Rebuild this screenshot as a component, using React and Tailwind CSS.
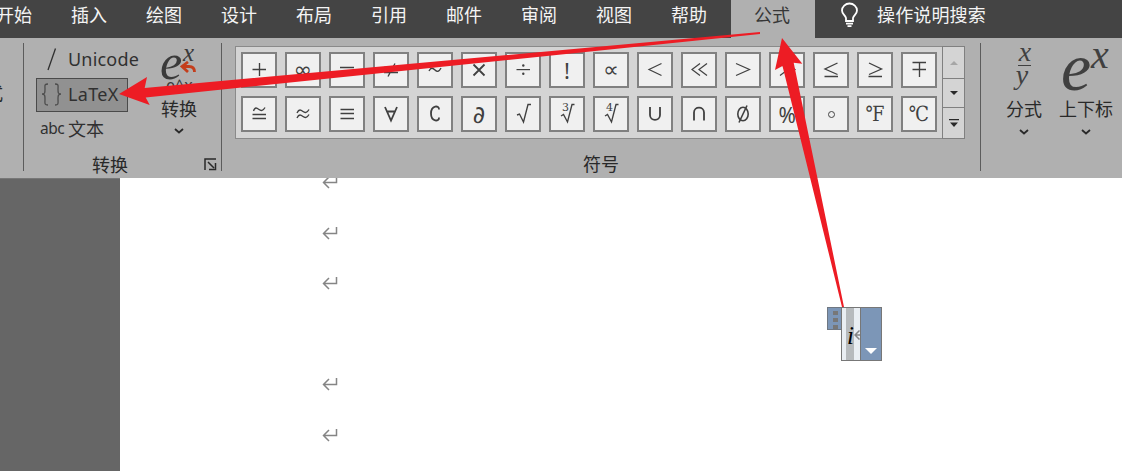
import React from "react";

const TABS = ["开始", "插入", "绘图", "设计", "布局", "引用", "邮件", "审阅", "视图", "帮助"];
const SYMBOLS = [
  ["+", "∞", "=", "≠", "~", "×", "÷", "!", "∝", "<", "≪", ">", "≫", "≤", "≥", "∓"],
  ["≅", "≈", "≡", "∀", "∁", "∂", "√", "∛", "∜", "∪", "∩", "∅", "%", "°", "℉", "℃"],
];

const strokeGlyphs = {
  "+": "M9.500 15.500H23M16.500 9V22",
  "=": "M9 13.500H23M9 18.500H23",
  "≠": "M9 13.500H23M9 18.500H23M20 9.500L13 22.500",
  "~": "M10 17C12 13 14 14 16 16S20 18 22 14",
  "×": "M10.5 10.5L21.5 21.5M21.5 10.5L10.5 21.5",
  "<": "M22.5 9.5L10 15.5L22.5 21.5",
  ">": "M9 9.5L22.5 15.5L9 21.5",
  "≪": "M17 9.5L9 15.5L17 21.5M24 9.5L16 15.5L24 21.5",
  "≫": "M9 9.5L17 15.5L9 21.5M16 9.5L24 15.5L16 21.5",
  "≤": "M22.5 9L10 15L22.5 20.5M9.5 22.5H23",
  "≥": "M10 9L22.5 15L10 20.5M9.5 22.5H23",
  "∓": "M9.5 8.5H23M9.5 15.5H23M16.500 8.5V23",
  "≅": "M10.500 13C12 8.500 14 10 16 11.500S20 13 22 9.500M9.500 16.500H23M9.500 20.500H23",
  "≈": "M10 15C12 10.500 14 12 16 13.500S20 15 22 11.500M10 20C12 15.500 14 17 16 18.500S20 20 22 16.500",
  "≡": "M9.500 11.500H23M9.500 15.500H23M9.500 20.500H23",
  "∀": "M10 9L16 22.500L22 9M12 13.500H20",
  "∁": "M20 11.500C20.500 7 12 7 12 15.500S20.500 24 20 19.500",
  "√": "M10 17L12.500 16L16.500 24L21 6.500H24",
  "∛": "M10 18L12.500 16.500L16.500 24L21 6.500H23.500",
  "∜": "M10 18L12.500 16.500L16.500 24L21 6.500H23.500",
  "∪": "M11 9V17C11 23.500 21 23.500 21 17V9",
  "∩": "M11 22.500V14.500C11 8 21 8 21 14.500V22.500",
};

const boldStrokes = ["∪", "∩", "×", "∀", "∁"];
const thinLines = ["<", ">", "≪", "≫"];
const rootIndex = { "∛": "3", "∜": "4" };

function glyphFont(s) {
  if (s === "∞" || s === "∝") return "font-['DejaVu_Sans'] text-[22px] leading-8";
  if (s === "℉" || s === "℃") return "inline-block scale-x-[0.86] font-['DejaVu_Serif'] text-[21px] leading-8";
  if (s === "!") return "font-['Noto_Sans',sans-serif] text-[22px] leading-[30px]";
  if (s === "∂") return "font-['Noto_Sans','DejaVu_Sans',sans-serif] text-[24px] leading-[30px]";
  return "inline-block scale-x-[0.95] font-['Noto_Sans','DejaVu_Sans',sans-serif] text-[22px] leading-8";
}

function SymbolContent({ s }) {
  const path = strokeGlyphs[s];
  if (path) {
    return (
      <svg
        viewBox="0 0 32 32"
        className="h-8 w-8"
        fill="none"
        stroke="currentColor"
        strokeWidth={boldStrokes.includes(s) ? 1.8 : thinLines.includes(s) ? 1.2 : 1.35}
      >
        <path d={path} />
      </svg>
    );
  }
  if (s === "÷") {
    return (
      <svg viewBox="0 0 32 32" className="h-8 w-8" fill="currentColor">
        <path d="M9.500 15H23V16.200H9.500Z" />
        <circle cx="16.300" cy="11.500" r="1.200" />
        <circle cx="16.300" cy="19.800" r="1.200" />
      </svg>
    );
  }
  if (s === "°") return <span className="h-[7px] w-[7px] rounded-full border-[1.3px] border-[#444]" />;
  if (s === "∅") {
    return (
      <svg viewBox="0 0 32 32" className="h-8 w-8" fill="none" stroke="currentColor" strokeWidth="1.6">
        <ellipse cx="16" cy="16" rx="5.200" ry="6.800" />
        <path d="M20 7.500L12 24.500" />
      </svg>
    );
  }
  return <span className={glyphFont(s)}>{s}</span>;
}

function Symbol({ s }) {
  return (
    <button className="relative flex h-9 w-9 shrink-0 items-center justify-center border-2 border-[#808080] bg-[#f0f0f0] text-[#404040]">
      <SymbolContent s={s} />
      {rootIndex[s] && (
        <span className="absolute top-[4px] left-[11px] font-['DejaVu_Serif',serif] text-[11px] leading-[12px]">{rootIndex[s]}</span>
      )}
    </button>
  );
}

function Chevron() {
  return (
    <svg viewBox="0 0 10 6" className="h-[6px] w-[10px]" fill="none" stroke="#292929" strokeWidth="1.8">
      <path d="M1 1L5 4.500L9 1" />
    </svg>
  );
}

function Enter() {
  return (
    <svg viewBox="0 0 17 16" className="block h-4 w-[17px]" fill="none" stroke="#858585" strokeWidth="1.5">
      <path d="M14.500 2V8.500H1.500M7 3L1.500 8.500L7 14" />
    </svg>
  );
}

function Header() {
  return (
    <header className="flex h-[38px] bg-[#444] text-[18px] leading-[28px] text-[#f4f4f4]">
      <nav className="-ml-1 flex w-[735px] shrink-0">
        {TABS.map((t) => (
          <span key={t} className="w-[75px] shrink-0 last:w-[60px]">{t}</span>
        ))}
      </nav>
      <span className="w-[84px] shrink-0 bg-[#b0b0b0] pl-[23px] text-[#363636]">公式</span>
      <div className="flex pl-[25px]">
        <svg viewBox="0 0 20 28" className="mt-[2px] h-7 w-5" fill="none" stroke="#fff" strokeWidth="1.8">
          <path d="M6 19V16C5 13 2 12 2 8.500A7.500 7 0 0 1 17 8.500C17 12 14 13 13 16V19ZM6 21.700H13M7.500 24.200H11.500" />
        </svg>
        <span className="ml-[17px] tracking-[0.15px]">操作说明搜索</span>
      </div>
    </header>
  );
}

function ConvertGroup() {
  return (
    <section className="flex w-[198px] shrink-0 flex-col">
      <div className="flex h-[111px]">
        <div className="flex w-[120px] flex-col pl-3 font-['Noto_Sans','Noto_Sans_CJK_SC',sans-serif] text-[18px] text-[#303030]">
          <div className="mb-[3px] flex h-[32px] items-center">
            <svg viewBox="0 0 32 32" className="h-8 w-8 shrink-0" fill="none" stroke="#303030" strokeWidth="1.3">
              <path d="M12 27L19.500 5.500" />
            </svg>
            <span className="tracking-[0.2px]">Unicode</span>
          </div>
          <div className="flex h-[34px] w-[92px] shrink-0 items-center border border-[#4a4a4a] bg-[#919191]">
            <svg viewBox="0 0 31 32" className="h-8 w-[31px] shrink-0" fill="none" stroke="#4c4c4c" strokeWidth="1.3">
              <path d="M11 5C7 5 8 7 8 10C8 14 8 15 5 15C8 15 8 17 8 20C8 24 7 26 11 26M18 5C22 5 21 7 21 10C21 14 21 15 24 15C21 15 21 17 21 20C21 24 22 26 18 26" />
            </svg>
            <span className="-mt-[2px] tracking-[0.3px]">LaTeX</span>
          </div>
          <div className="flex h-[34px] items-center">
            <span className="w-8 pl-[4px] text-[15.5px] tracking-[-0.5px]">abc</span>
            <span>文本</span>
          </div>
        </div>
        <div className="flex w-[70px] flex-col items-center">
          <div className="relative h-[52px] w-12 shrink-0 text-[#3a3a3a]">
            <span className="absolute top-[-5px] left-[5px] font-['Liberation_Serif',serif] text-[50px] leading-[48px] italic">e</span>
            <span className="absolute top-[-2px] left-[28px] font-['Liberation_Serif',serif] text-[25px] leading-[24px] italic">x</span>
            <svg viewBox="0 0 17 13" className="absolute top-[18px] left-[25px] h-[13px] w-[17px]" fill="none" stroke="#c43e1c" strokeWidth="2.800">
              <path d="M8 1L2 5.500L8 11M2 5.500H9C13 5.500 14.500 8 14.500 11" />
            </svg>
            <span className="absolute top-[33px] left-[11px] font-['Noto_Sans',sans-serif] text-[16px] leading-[18px]">e^x</span>
          </div>
          <span className="text-[18px] leading-[26px]">转换</span>
          <div className="mt-[7px]"><Chevron /></div>
        </div>
      </div>
      <div className="flex h-5 items-center">
        <span className="w-[172px] text-center text-[18px] leading-5">转换</span>
        <svg viewBox="0 0 13 13" className="ml-[8px] h-[13px] w-[13px]" fill="none" stroke="#292929" strokeWidth="1.500">
          <path d="M1 12V1H12M4 4L10 10M11.500 5V11.500H5" />
        </svg>
      </div>
    </section>
  );
}

function SymbolsGroup() {
  return (
    <section className="flex w-[758px] shrink-0 flex-col pt-[3px] pl-[13px]">
      <div className="flex h-[93px] w-[730px] border border-[#8a8a8a] bg-[#d4d4d4]">
        <div className="flex w-[706px] shrink-0 flex-col gap-2 pt-[5px] pl-[5px]">
          {SYMBOLS.map((row, i) => (
            <div key={i} className="flex gap-2">{row.map((s) => <Symbol key={s} s={s} />)}</div>
          ))}
        </div>
        <div className="-my-px -mr-px grid flex-1 grid-rows-[32px_29px_30px] border border-[#808080]">
          <div className="flex items-center justify-center border-b border-[#808080]">
            <svg viewBox="0 0 8 4" className="h-1 w-2" fill="#a6a6a6"><path d="M0 4L4 0L8 4Z" /></svg>
          </div>
          <div className="flex items-center justify-center border-b border-[#808080]">
            <svg viewBox="0 0 8 4" className="h-1 w-2" fill="#292929"><path d="M0 0H8L4 4Z" /></svg>
          </div>
          <div className="flex items-center justify-center">
            <svg viewBox="0 0 10 8" className="h-2 w-[10px]" fill="#292929"><path d="M0 0H10V1.200H0ZM1 3.500H9L5 8Z" /></svg>
          </div>
        </div>
      </div>
      <span className="mt-[14px] w-[732px] text-center text-[18px] leading-5">符号</span>
    </section>
  );
}

function StructuresGroup() {
  return (
    <section className="flex flex-1 pl-[18px] text-[18px]">
      <div className="flex w-[50px] shrink-0 flex-col items-center">
        <div className="flex h-[52px] shrink-0 flex-col items-center font-['Liberation_Serif',serif] text-[28px] text-[#404040] italic">
          <span className="h-[22px] pl-[2px] leading-[18px]">x</span>
          <span className="h-px w-[13px] shrink-0 bg-[#404040]" />
          <span className="pr-1 leading-[18px]">y</span>
        </div>
        <span className="leading-[26px]">分式</span>
        <div className="mt-[8px]"><Chevron /></div>
      </div>
      <div className="flex w-[74px] shrink-0 flex-col items-center">
        <div className="relative h-[52px] w-[54px] shrink-0 font-['Liberation_Serif',serif] text-[#404040] italic">
          <span className="absolute top-[-8px] left-[2px] text-[68px] leading-[64px]">e</span>
          <span className="absolute top-[-7px] left-[32px] text-[40px] leading-[37px]">x</span>
        </div>
        <span className="leading-[26px] whitespace-nowrap">上下标</span>
        <div className="mt-[8px]"><Chevron /></div>
      </div>
    </section>
  );
}

function EquationBox() {
  return (
    <div className="absolute top-[129px] left-[707px] flex items-start">
      <div className="flex h-[23px] w-[15px] flex-col items-end gap-[3px] border border-[#6f7782] bg-[#7c96b7] pt-[3px] pr-[3px]">
        <i className="h-1 w-[5px] bg-[#777]" />
        <i className="h-1 w-[5px] bg-[#777]" />
        <i className="h-1 w-[5px] bg-[#777]" />
      </div>
      <div className="-ml-px flex h-[54px] w-[41px] border border-[#777]">
        <div className="relative w-[18px] overflow-hidden bg-[#e9eef3]">
          <div className="ml-1 h-full w-2 bg-[#b6babd]" />
          <span className="absolute top-[14px] left-[5px] font-['Liberation_Serif',serif] text-[25px] leading-[28px] text-black italic">i</span>
          <svg viewBox="0 0 6 10" className="absolute top-[22px] left-[12px] h-[10px] w-[6px]" fill="none" stroke="#858585" strokeWidth="1.500">
            <path d="M5.500 0.500L1 5L5.500 9.500M1 5H6" />
          </svg>
        </div>
        <div className="flex flex-1 items-end justify-center border-l border-[#777] bg-[#7c96b7] pb-[6px]">
          <svg viewBox="0 0 12 6" className="h-[6px] w-3" fill="#fff"><path d="M0 0H12L6 6Z" /></svg>
        </div>
      </div>
    </div>
  );
}

export default function App() {
  return (
    <div className="relative h-[471px] w-[1122px] overflow-hidden bg-white font-['Noto_Sans_CJK_SC',sans-serif] text-[#292929]">
      <Header />
      <div className="flex h-[140px] overflow-hidden bg-[#b0b0b0] pt-[5px]">
        <div className="w-[23px] shrink-0 overflow-hidden pt-[36px] text-[18px] leading-[26px]">
          <span className="-ml-[15px] block">式</span>
        </div>
        <div className="h-32 w-px shrink-0 bg-[#5c5c5c]" />
        <ConvertGroup />
        <div className="-ml-px h-32 w-px shrink-0 bg-[#5c5c5c]" />
        <SymbolsGroup />
        <div className="h-32 w-px shrink-0 bg-[#5c5c5c]" />
        <StructuresGroup />
      </div>
      <main className="flex h-[293px]">
        <aside className="w-[120px] border-t border-[#777] bg-[#666]" />
        <div className="relative flex-1 overflow-hidden bg-white">
          <div className="-mt-1 flex flex-col pl-[202px]">
            <div className="h-[51px]"><Enter /></div>
            <div className="h-[50px]"><Enter /></div>
            <div className="h-[101px]"><Enter /></div>
            <div className="h-[51px]"><Enter /></div>
            <div className="h-[51px]"><Enter /></div>
          </div>
          <EquationBox />
        </div>
      </main>
      <svg viewBox="0 0 1122 471" className="pointer-events-none absolute inset-0 h-full w-full" fill="#ed1c24">
        <path d="M119 94L147 77L144.700 88L760 32V34L145.700 97.500L149.700 105Z" />
        <path d="M782 38L802.300 63.700L793.700 62.700L844 307H842L782.500 66L775 70Z" />
      </svg>
    </div>
  );
}
